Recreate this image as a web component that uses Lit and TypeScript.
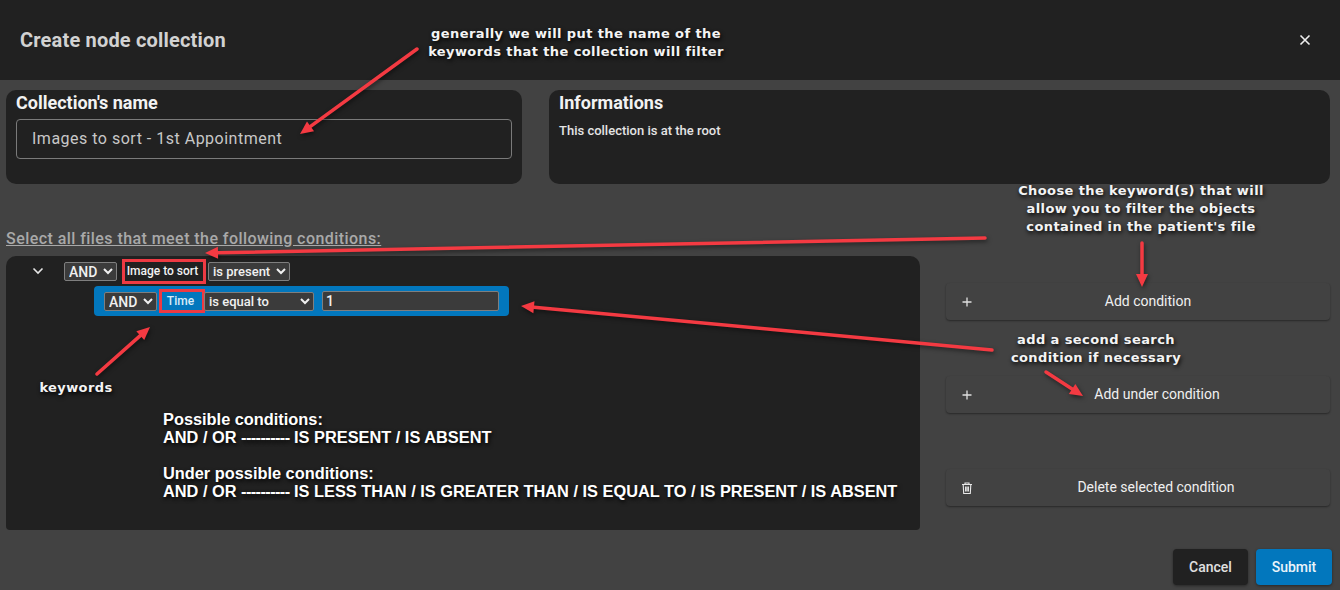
import {LitElement, css, html, svg} from 'lit';
import {customElement} from 'lit/decorators.js';

// Red arrows drawn over the screenshot: [x1, y1, tipX, tipY]
const ARROWS = [
  [417, 49, 300, 134],
  [985, 238, 205, 253],
  [1142, 243, 1142, 287],
  [992, 350, 521, 306],
  [1046, 372, 1083, 396],
  [97, 374, 150, 327],
];

// Annotation captions: [centre x, top y, lines]
const NOTES: [number, number, string[]][] = [
  [576, 25, ['generally we will put the name of the', 'keywords that the collection will filter']],
  [1141, 182, ['Choose the keyword(s) that will', 'allow you to filter the objects', "contained in the patient's file"]],
  [1096, 331, ['add a second search', 'condition if necessary']],
  [76, 379, ['keywords']],
];

@customElement('app-root')
export class AppRoot extends LitElement {
  static get styles() {
    return css`
      :host {
        position: relative;
        display: flex;
        flex-direction: column;
        width: 1340px;
        height: 590px;
        overflow: hidden;
        background: #424242;
        color: #fff;
        font-family: Roboto, sans-serif;
      }
      .header {
        display: flex;
        align-items: center;
        justify-content: space-between;
        flex: none;
        height: 80px;
        padding: 0 29px 0 20px;
        box-sizing: border-box;
        background: #212121;
      }
      .title {
        font-size: 20px;
        font-weight: 700;
        letter-spacing: 0.18px;
        color: #d2d2d2;
      }
      .close {
        display: block;
        width: 12px;
        height: 12px;
      }
      .top {
        display: flex;
        gap: 27px;
        padding: 10px 10px 0 6px;
      }
      .paper {
        box-sizing: border-box;
        height: 94px;
        padding: 3px 10px;
        border-radius: 10px;
        background: #212121;
      }
      .name {
        width: 516px;
        flex: none;
      }
      .info {
        flex: 1;
      }
      h2 {
        margin: 0;
        font-size: 18px;
        line-height: 19px;
        font-weight: 700;
        color: #f2f2f2;
      }
      .name-input {
        display: block;
        box-sizing: border-box;
        width: 100%;
        height: 40px;
        margin-top: 7px;
        padding: 0 15px 2px;
        border: 1px solid #7a7a7a;
        border-radius: 4px;
        background: transparent;
        color: #c8c8c8;
        font: 400 16px Roboto, sans-serif;
        letter-spacing: 0.5px;
        outline: none;
      }
      .info p {
        margin: 11px 0 0;
        font-size: 13px;
        font-weight: 500;
        color: #e4e4e4;
      }
      .lead {
        margin: 45px 0 8px 6px;
        font-size: 16px;
        line-height: 19px;
        font-weight: 500;
        letter-spacing: 0.44px;
        color: #a9a9a9;
        text-decoration: underline;
      }
      .main {
        display: flex;
        gap: 26px;
        padding: 0 10px 0 6px;
      }
      .tree {
        flex: none;
        box-sizing: border-box;
        width: 914px;
        height: 274px;
        border-radius: 10px 10px 4px 4px;
        background: #212121;
      }
      .row {
        display: flex;
        align-items: center;
      }
      .row-top {
        height: 30px;
        padding-left: 26px;
      }
      .chevron {
        width: 12px;
        height: 8px;
        margin-right: 20px;
      }
      select,
      .value {
        box-sizing: border-box;
        height: 19px;
        border: 1px solid #7f7f7f;
        border-radius: 2px;
        background: #3b3b3b;
        color: #f0f0f0;
        font: 500 14px Roboto, sans-serif;
        outline: none;
        color-scheme: dark;
      }
      .op {
        width: 53px;
        font-size: 14px;
      }
      .present {
        width: 82px;
        font-size: 13px;
      }
      .equal {
        width: 110px;
        font-size: 13px;
      }
      .key {
        box-sizing: border-box;
        font-size: 12px;
        font-weight: 500;
        text-align: center;
        outline: 3px solid #ee3a43;
        outline-offset: -3px;
      }
      .key-root {
        width: 84px;
        height: 25px;
        line-height: 25px;
        margin: 0 2px 0 5px;
        padding-right: 3px;
        color: #f2f2f2;
      }
      .key-sub {
        width: 46px;
        height: 24px;
        line-height: 24px;
        margin: 0 -1px 0 2px;
        padding-right: 3px;
        color: #d9ecf8;
      }
      .selected {
        box-sizing: border-box;
        width: 415px;
        height: 30px;
        margin-left: 88px;
        padding-left: 10px;
        border-radius: 4px;
        background: #0277bd;
      }
      .value {
        width: 177px;
        height: 20px;
        margin-left: 8px;
        padding: 0 3px;
        font-weight: 500;
      }
      .conditions {
        margin: 94px 0 0 157px;
        font-family: "Liberation Sans", Arial, sans-serif;
        font-size: 16.35px;
        font-weight: 700;
        line-height: 18px;
        white-space: nowrap;
        text-shadow: 1px 2px 4px #000;
      }
      .conditions .gap {
        margin-top: 18px;
      }
      .dashes {
        display: inline-block;
        letter-spacing: -0.6px;
      }
      .side {
        flex: 1;
        display: flex;
        flex-direction: column;
        gap: 56px;
        padding-top: 27px;
      }
      .action {
        position: relative;
        display: flex;
        align-items: center;
        justify-content: center;
        height: 37px;
        border-radius: 4px;
        background: #424242;
        box-shadow: 0 1px 2px rgba(0, 0, 0, 0.4);
        color: #f0f0f0;
        font-size: 14px;
      }
      .action span {
        margin: 0 0 2px 36px;
      }
      .action.short span {
        margin-left: 20px;
      }
      .action.under span {
        margin-left: 38px;
      }
      .action svg {
        position: absolute;
        left: 15px;
        top: 13px;
        width: 12px;
        height: 12px;
      }
      .footer {
        display: flex;
        justify-content: flex-end;
        gap: 8px;
        padding: 19px 8px 0 0;
      }
      .btn {
        width: 75px;
        height: 36px;
        line-height: 36px;
        text-align: center;
        border-radius: 4px;
        font-size: 14px;
        font-weight: 500;
        box-shadow: 0 1px 3px rgba(0, 0, 0, 0.4);
      }
      .cancel {
        background: #212121;
        color: #e0e0e0;
      }
      .submit {
        width: 76px;
        background: #0277bd;
        color: #eaf4fa;
      }

      /* Annotations pasted over the screenshot. */

      .arrows {
        position: absolute;
        inset: 0;
        width: 1340px;
        height: 590px;
        pointer-events: none;
        filter: drop-shadow(1px 2px 2px rgba(0, 0, 0, 0.5));
      }
      .note {
        position: absolute;
        transform: translateX(-50%);
        font-family: "DejaVu Sans", sans-serif;
        font-size: 13px;
        font-weight: 700;
        letter-spacing: 0.4px;
        line-height: 18px;
        text-align: center;
        white-space: nowrap;
        color: #f4f4f4;
        text-shadow: 1px 2px 4px #000;
      }
    `;
  }

  private arrow([x1, y1, x2, y2]: number[]) {
    const len = Math.hypot(x2 - x1, y2 - y1);
    const ux = (x2 - x1) / len;
    const uy = (y2 - y1) / len;
    const bx = x2 - ux * 13;
    const by = y2 - uy * 13;
    const head = `${x2},${y2} ${bx - uy * 6},${by + ux * 6} ${bx + uy * 6},${by - ux * 6}`;
    return svg`
      <line x1=${x1} y1=${y1} x2=${bx} y2=${by} stroke="#f43a42" stroke-width="3.5" stroke-linecap="round"></line>
      <polygon points=${head} fill="#f43a42"></polygon>`;
  }

  render() {
    return html`
      <div class="header">
        <div class="title">Create node collection</div>
        <svg class="close" viewBox="0 0 12 12">
          <path d="M1.5 1.5l9 9M10.5 1.5l-9 9" stroke="#eee" stroke-width="1.6" fill="none"></path>
        </svg>
      </div>

      <div class="top">
        <div class="paper name">
          <h2>Collection's name</h2>
          <input class="name-input" .value=${'Images to sort - 1st Appointment'} />
        </div>
        <div class="paper info">
          <h2>Informations</h2>
          <p>This collection is at the root</p>
        </div>
      </div>

      <div class="lead">Select all files that meet the following conditions:</div>

      <div class="main">
        <div class="tree">
          <div class="row row-top">
            <svg class="chevron" viewBox="0 0 12 8">
              <path d="M1.5 1.5L6 6l4.5-4.5" stroke="#e6e6e6" stroke-width="1.6" fill="none"></path>
            </svg>
            <select class="op"><option>AND</option><option>OR</option></select>
            <div class="key key-root">Image to sort</div>
            <select class="present"><option>is present</option><option>is absent</option></select>
          </div>
          <div class="row selected">
            <select class="op"><option>AND</option><option>OR</option></select>
            <div class="key key-sub">Time</div>
            <select class="equal"><option>is equal to</option><option>is less than</option></select>
            <input class="value" .value=${'1'} />
          </div>
          <div class="conditions">
            <div>Possible conditions:</div>
            <div>AND / OR <span class="dashes">----------</span> IS PRESENT / IS ABSENT</div>
            <div class="gap">Under possible conditions:</div>
            <div>AND / OR <span class="dashes">----------</span> IS LESS THAN / IS GREATER THAN / IS EQUAL TO / IS PRESENT / IS ABSENT</div>
          </div>
        </div>

        <div class="side">
          <div class="action short">
            <svg viewBox="0 0 12 12"><path d="M6 1.5v9M1.5 6h9" stroke="#e0e0e0" stroke-width="1.3" fill="none"></path></svg>
            <span>Add condition</span>
          </div>
          <div class="action under">
            <svg viewBox="0 0 12 12"><path d="M6 1.5v9M1.5 6h9" stroke="#e0e0e0" stroke-width="1.3" fill="none"></path></svg>
            <span>Add under condition</span>
          </div>
          <div class="action">
            <svg viewBox="0 0 12 12">
              <path d="M1 2.5h10M4 2.5V1h4v1.5M2.2 2.5l.5 9h6.6l.5-9M4.6 4.5v5M6 4.5v5M7.4 4.5v5" stroke="#e8e8e8" stroke-width="1.1" fill="none"></path>
            </svg>
            <span>Delete selected condition</span>
          </div>
        </div>
      </div>

      <div class="footer">
        <div class="btn cancel">Cancel</div>
        <div class="btn submit">Submit</div>
      </div>

      <svg class="arrows" viewBox="0 0 1340 590">${ARROWS.map((a) => this.arrow(a))}</svg>
      ${NOTES.map(([x, y, lines]) => html`
        <div class="note" style="left:${x}px;top:${y}px">${lines.map((l) => html`${l}<br />`)}</div>`)}
    `;
  }
}

declare global {
  interface HTMLElementTagNameMap {
    "app-root": AppRoot;
  }
}
